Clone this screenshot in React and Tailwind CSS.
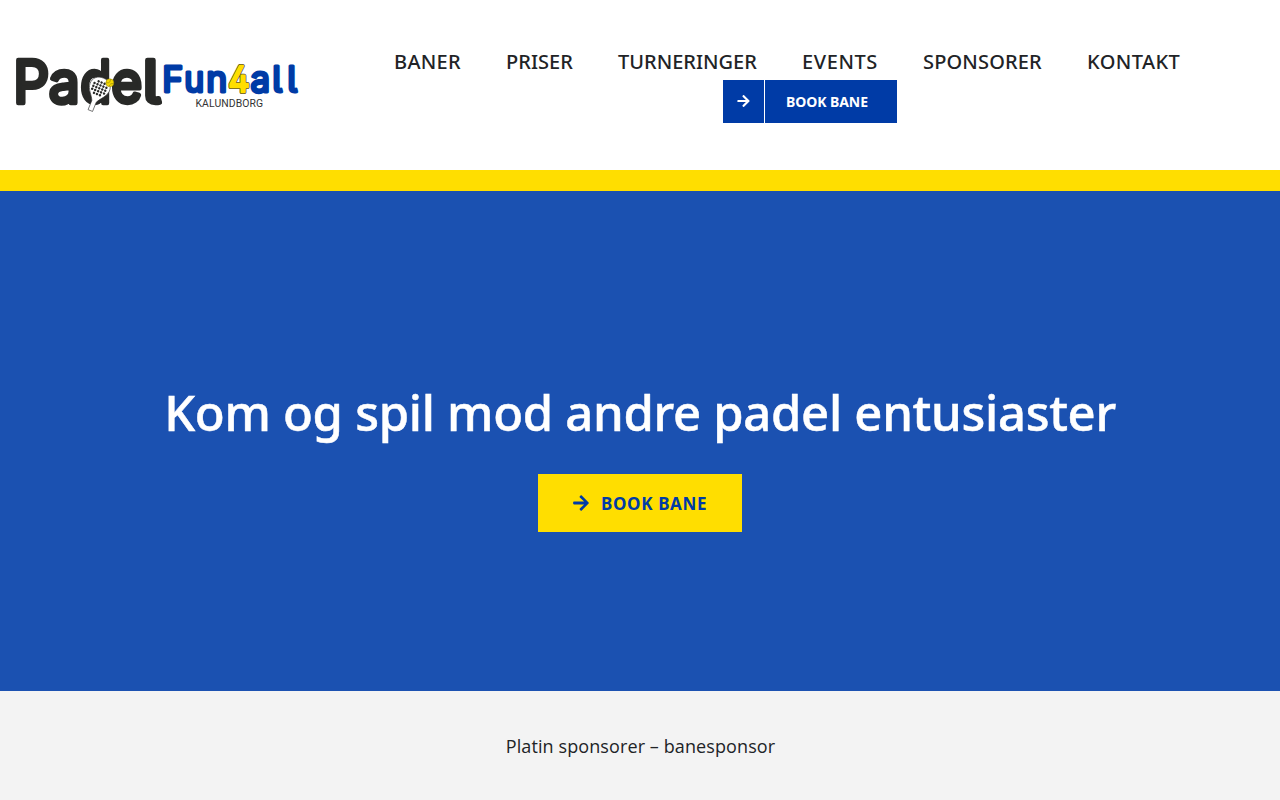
import { FaArrowRight } from 'react-icons/fa';

const navItems = [
    { label: 'BANER', className: 'w-[67px] tracking-[0.3px]' },
    { label: 'PRISER', className: 'w-[67px] tracking-[0.05px]' },
    { label: 'TURNERINGER', className: 'w-[139px]' },
    { label: 'EVENTS', className: 'w-[76px] tracking-[0.6px]' },
    { label: 'SPONSORER', className: 'w-[119px] tracking-[0.15px]' },
    { label: 'KONTAKT', className: 'w-[93px] tracking-[0.4px]' },
];

// cv05 = l with a tail, cv02 = open 4
const letterforms = { fontFeatureSettings: '"cv05", "cv02"' };

const Logo = () => (
    <svg className="w-[300px] h-[92px]" viewBox="8 36 300 92" role="img" aria-label="Padel Fun4all Kalundborg">
        <g className="font-['Inter',sans-serif]" fontWeight="400" strokeLinejoin="round" strokeLinecap="round" style={letterforms}>
            <g fontSize="58.6" fill="#282927" stroke="#282927" strokeWidth="4.4">
                <text x="13.3" y="102.8" textLength="36" lengthAdjust="spacingAndGlyphs">P</text>
                <text x="48.7" y="102.8" textLength="31" lengthAdjust="spacingAndGlyphs">a</text>
                <text x="80.2" y="102.8" textLength="31" lengthAdjust="spacingAndGlyphs">d</text>
                <text x="111.3" y="102.8" textLength="31" lengthAdjust="spacingAndGlyphs">e</text>
                <text x="142.6" y="102.8" textLength="18" lengthAdjust="spacingAndGlyphs">l</text>
            </g>
            <g fontSize="35.5" fill="#003ba6" stroke="#003ba6" strokeWidth="3">
                <text x="162.2" y="91.7">F</text>
                <text x="184.3" y="91.7" textLength="20" lengthAdjust="spacingAndGlyphs">u</text>
                <text x="206.3" y="91.7" textLength="21" lengthAdjust="spacingAndGlyphs">n</text>
                <text x="250.6" y="91.7" textLength="19.5" lengthAdjust="spacingAndGlyphs">a</text>
                <text x="272.3" y="91.7">l</text>
                <text x="287.2" y="91.7">l</text>
            </g>
            <g fontSize="35.5" fill="#ffde00">
                <text x="228.6" y="91.7" stroke="#4d4b2a" strokeWidth="4.2" textLength="21" lengthAdjust="spacingAndGlyphs">4</text>
                <text x="228.6" y="91.7" stroke="#ffde00" strokeWidth="2.6" textLength="21" lengthAdjust="spacingAndGlyphs" aria-hidden="true">4</text>
            </g>
        </g>
        <text x="195.5" y="106.5" className="font-['Roboto',sans-serif]" fontSize="10.4" fill="#333" textLength="67.5">
            KALUNDBORG
        </text>

        {/* racket */}
        <g transform="translate(99.3 88.3) rotate(22)">
            <path d="M0 -11C6.5 -11 10.6 -7 10.4 -1C10.2 5 4.6 9 2.4 14V24H-2.4V14C-4.6 9 -10.2 5 -10.4 -1C-10.6 -7 -6.5 -11 0 -11Z" fill="#fff" stroke="#333" strokeWidth=".6" />
            <g stroke="#282927" strokeWidth="2.5" strokeLinecap="round" strokeDasharray="0 3.2">
                <path d="M-3.2 -6.2H4" />
                <path d="M-6.4 -3.1H7" />
                <path d="M-6.4 0H7" />
                <path d="M-6.4 3.1H7" />
                <path d="M-3.2 6.2H4" />
            </g>
        </g>
        <circle cx="109.8" cy="82.8" r="4" fill="#f4d800" stroke="#8a7a10" strokeWidth=".5" />
        <path d="M106.2 82.2C108.5 83.6 110.5 82.5 110.4 79.2M109 86.4C109.5 84.2 111.5 83 113.4 83.7" fill="none" stroke="#8a7a10" strokeWidth=".6" />
    </svg>
);

const Header = () => (
    <header className="h-[191px] bg-white border-b-[21px] border-[#ffde00] flex">
        <a href="#" className="block pl-2 pt-9">
            <Logo />
        </a>
        <nav className="ml-[86px] pt-[47px] w-[832px] flex flex-col items-start">
            <ul className="flex gap-[45px] h-[33px] text-[20px] leading-[30px] font-medium text-[#212326] whitespace-nowrap">
                {navItems.map((item) => (
                    <li key={item.label} className={item.className}>
                        <a href="#">{item.label}</a>
                    </li>
                ))}
            </ul>
            <a href="#" className="ml-[329px] flex w-[174px] h-[43px] bg-[#003ba6] text-white text-[14px] font-bold whitespace-nowrap">
                <span className="w-[42px] pr-px pb-px border-r border-white flex items-center justify-center">
                    <FaArrowRight className="w-[13px] h-[14px]" />
                </span>
                <span className="pl-[21px] leading-[43px] tracking-[-0.08px]">BOOK BANE</span>
            </a>
        </nav>
    </header>
);

const Hero = () => (
    <section className="h-[500px] bg-[#1b51b1] flex flex-col items-center pt-[186px]">
        <h1 className="text-[49px] leading-[70px] font-medium tracking-[-0.3px] [-webkit-text-stroke:0.5px_white] text-white whitespace-nowrap">
            Kom og spil mod andre padel entusiaster
        </h1>
        <a href="#" className="mt-[27px] w-[204px] h-[58px] pl-[35px] bg-[#ffde00] text-[#003ba6] flex items-center gap-3 text-[17px] font-bold whitespace-nowrap">
            <FaArrowRight className="w-[16px] h-[18px]" />
            <span className="pt-px tracking-[0.65px]">BOOK BANE</span>
        </a>
    </section>
);

export default function App() {
    return (
        <div className="h-[800px] overflow-hidden bg-[#f3f3f3] font-['Noto_Sans',sans-serif]">
            <Header />
            <Hero />
            <p className="pt-[38px] pl-px text-center text-[18px] leading-[34px] tracking-[0.1px] text-[#212326] font-['Open_Sans',sans-serif]">
                Platin sponsorer – banesponsor
            </p>
        </div>
    );
}
